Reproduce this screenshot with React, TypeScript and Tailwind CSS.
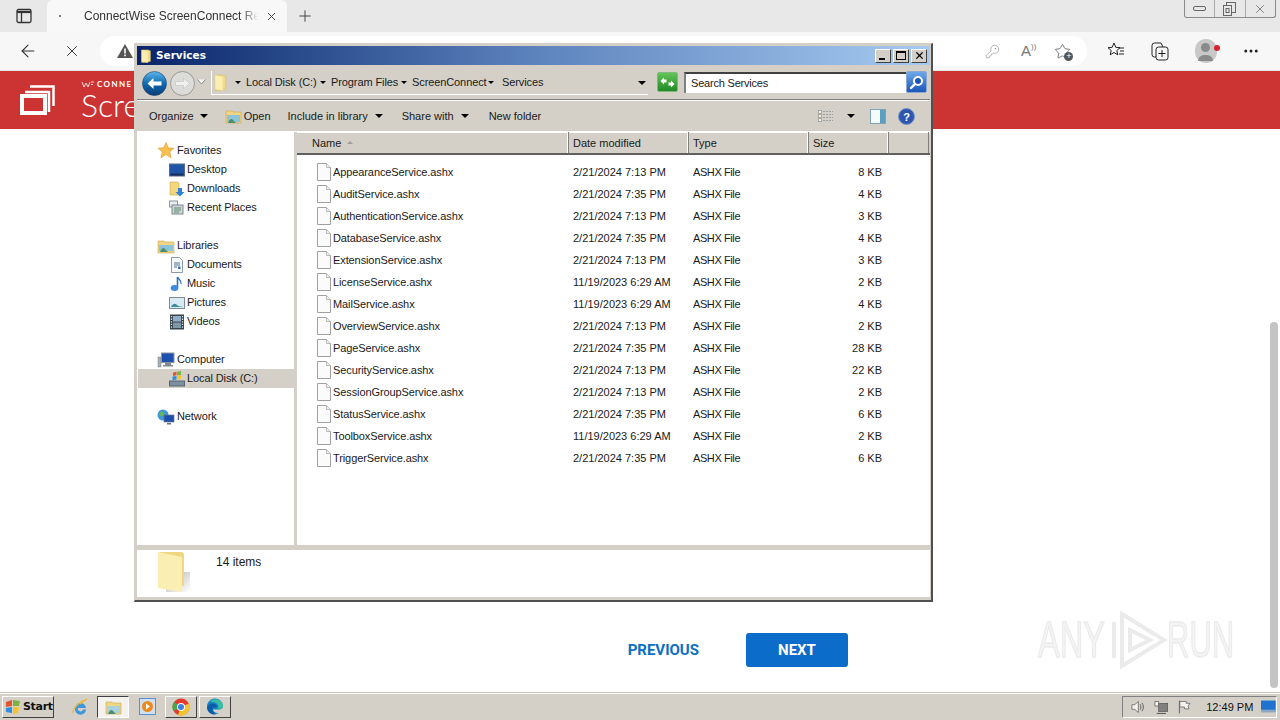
import React from 'react'
import { ArrowLeft, X, Plus, KeyRound, Star, MoreHorizontal } from 'lucide-react'

const files = [
  ['AppearanceService.ashx', '2/21/2024 7:13 PM', '8 KB'],
  ['AuditService.ashx', '2/21/2024 7:35 PM', '4 KB'],
  ['AuthenticationService.ashx', '2/21/2024 7:13 PM', '3 KB'],
  ['DatabaseService.ashx', '2/21/2024 7:35 PM', '4 KB'],
  ['ExtensionService.ashx', '2/21/2024 7:13 PM', '3 KB'],
  ['LicenseService.ashx', '11/19/2023 6:29 AM', '2 KB'],
  ['MailService.ashx', '11/19/2023 6:29 AM', '4 KB'],
  ['OverviewService.ashx', '2/21/2024 7:13 PM', '2 KB'],
  ['PageService.ashx', '2/21/2024 7:35 PM', '28 KB'],
  ['SecurityService.ashx', '2/21/2024 7:13 PM', '22 KB'],
  ['SessionGroupService.ashx', '2/21/2024 7:13 PM', '2 KB'],
  ['StatusService.ashx', '2/21/2024 7:35 PM', '6 KB'],
  ['ToolboxService.ashx', '11/19/2023 6:29 AM', '2 KB'],
  ['TriggerService.ashx', '2/21/2024 7:35 PM', '6 KB'],
]

const FolderIcon = ({ size = 16 }: { size?: number }) => (
  <svg width={size} height={size} viewBox="0 0 16 16">
    <path d="M3 1h7l3 1v12l-4 1.500H3z" fill="#f2dc8c" stroke="#d8bd62" strokeWidth="0.600" />
    <path d="M3 1l7 2v12.500L3 14z" fill="#fbeeb0" />
  </svg>
)

const Caret = () => <span className="inline-block h-0 w-0 border-x-[4px] border-t-[4px] border-x-transparent border-t-black" />

const PageFile = () => (
  <svg width="14" height="18" viewBox="0 0 14 18" className="shrink-0">
    <path d="M.5.5h9l4 4v13H.5z" fill="#fbfbfb" stroke="#a0a0a0" />
    <path d="M9.500.5v4h4" fill="#eee" stroke="#b8b8b8" />
  </svg>
)

const NavGlyph = ({ name }: { name: string }) => {
  if (name === 'Favorites')
    return (
      <svg width="18" height="17" viewBox="0 0 16 16">
        <path d="M8 .5l2.200 5 5.300.4-4 3.500 1.300 5.500L8 11.800l-4.800 3.100 1.300-5.500-4-3.500 5.300-.4z" fill="#f8c04c" stroke="#e89a30" strokeWidth="0.600" />
      </svg>
    )
  if (name === 'Desktop')
    return (
      <svg width="16" height="16" viewBox="0 0 16 16">
        <rect x="0.500" y="2" width="15" height="12" fill="#1f55a8" stroke="#5a6a80" />
        <rect x="1.500" y="11.500" width="13" height="2" fill="#18305c" />
      </svg>
    )
  if (name === 'Downloads')
    return (
      <svg width="16" height="16" viewBox="0 0 16 16">
        <path d="M1 1h7l2 1v12H1z" fill="#f2d77e" stroke="#caa94e" strokeWidth="0.600" />
        <path d="M9 7h4v4h2.500l-4.500 4.500L6.500 11H9z" fill="#2f80d8" />
      </svg>
    )
  if (name === 'Recent Places')
    return (
      <svg width="16" height="16" viewBox="0 0 16 16">
        <rect x="0.500" y="1" width="8" height="6" fill="#e8eef2" stroke="#8a959c" />
        <rect x="3" y="5" width="11" height="9" fill="#cdd6da" stroke="#7c878d" />
        <path d="M5 8h7M5 10h7M5 12h5" stroke="#5f8c6a" />
      </svg>
    )
  if (name === 'Libraries')
    return (
      <svg width="18" height="16" viewBox="0 0 18 16">
        <path d="M1 3h6l1 1h9v11H1z" fill="#f0d585" stroke="#c9a850" strokeWidth="0.600" />
        <path d="M2 7h14v6H2z" fill="#8fc3d8" />
        <path d="M3 14c2-5 4-5 6-2s4 2 6 2z" fill="#4c8f6a" />
      </svg>
    )
  if (name === 'Documents')
    return (
      <svg width="16" height="16" viewBox="0 0 16 16">
        <path d="M2.500.5h8l3 3v12h-11z" fill="#f8fafc" stroke="#8a98a8" />
        <path d="M5 6h6M5 8h6M5 10h3" stroke="#4f6f9a" />
        <rect x="9" y="9.500" width="2.500" height="2.500" fill="#3a70b8" />
      </svg>
    )
  if (name === 'Music')
    return (
      <svg width="16" height="16" viewBox="0 0 16 16">
        <path d="M8.500 1v10.500" stroke="#2e6fc0" strokeWidth="1.600" />
        <path d="M8.500 1c1 2.500 4.500 3 3.500 7" fill="none" stroke="#2e6fc0" strokeWidth="1.300" />
        <ellipse cx="5.500" cy="12" rx="3.800" ry="3" fill="#3d8be0" />
      </svg>
    )
  if (name === 'Pictures')
    return (
      <svg width="16" height="16" viewBox="0 0 16 16">
        <rect x="0.500" y="2.500" width="15" height="11" fill="#d8eaf4" stroke="#7b8a96" />
        <path d="M2 12c2-4 4-4 6-2s4 1 6 2z" fill="#3f8d9c" />
      </svg>
    )
  if (name === 'Videos')
    return (
      <svg width="16" height="16" viewBox="0 0 16 16">
        <rect x="1" y="0.500" width="14" height="15" fill="#38424c" />
        <rect x="4" y="2" width="8" height="5.500" fill="#8fb0c8" />
        <rect x="4" y="8.500" width="8" height="5.500" fill="#7a98a8" />
        <path d="M2.500 2v12M13.500 2v12" stroke="#d8e0e4" strokeWidth="1.300" strokeDasharray="1.300 1.300" />
      </svg>
    )
  if (name === 'Computer')
    return (
      <svg width="18" height="16" viewBox="0 0 18 16">
        <rect x="1" y="5" width="3" height="10" fill="#a8b0b8" stroke="#70787f" strokeWidth="0.500" />
        <rect x="4.500" y="1" width="12.500" height="9.500" fill="#1d4fb0" stroke="#8a94a0" />
        <path d="M8 11h6v2h2v1.500H6V13h2z" fill="#7e8890" />
      </svg>
    )
  if (name === 'Local Disk (C:)')
    return (
      <svg width="16" height="16" viewBox="0 0 16 16">
        <rect x="0.500" y="10" width="15" height="5" fill="#7d8fa0" stroke="#59646e" />
        <path d="M4 1.500l3.500-.7v3.500L4 5z" fill="#e2562f" />
        <path d="M8 .7l4-.7v4l-4 .4z" fill="#7cb342" />
        <path d="M3.500 5.500L7.500 5v3.500l-4 .7z" fill="#2e8fe0" />
        <path d="M8 5l4-.4v3.500L8 8.500z" fill="#f4c430" />
      </svg>
    )
  return (
    <svg width="18" height="16" viewBox="0 0 18 16">
      <circle cx="6" cy="6" r="5.500" fill="#3d97d8" />
      <path d="M2 5c2-3 4-3 5-1s-2 4-4 3z" fill="#66b55a" />
      <rect x="7" y="6" width="10" height="7" fill="#1d4fb0" stroke="#6a7684" strokeWidth="0.700" />
      <path d="M10 14h4v1.500h-4z" fill="#6a7684" />
    </svg>
  )
}

const NavRow = ({ name, child, active }: { name: string; child?: boolean; active?: boolean }) => (
  <div className={`flex h-[19px] items-center ${child ? 'pl-[29px]' : 'pl-[17px]'} ${active ? 'bg-[#d4d0c8]' : ''}`}>
    <span className={`flex justify-center ${child ? 'w-[20px]' : 'w-[22px]'}`}>
      <NavGlyph name={name} />
    </span>
    <span className="whitespace-nowrap tracking-[-0.1px]">{name}</span>
  </div>
)

const NavGroup = ({ children }: { children: React.ReactNode }) => <div className="mb-[19px]">{children}</div>

const Crumb = ({ label, width, gap = 5 }: { label: string; width: number; gap?: number }) => (
  <span className="flex items-center pl-px" style={{ width }}>
    <span className="inline-block h-0 w-0 border-x-[3px] border-t-[3px] border-x-transparent border-t-black" />
    <span className="whitespace-nowrap tracking-[-0.1px]" style={{ marginLeft: gap }}>
      {label}
    </span>
  </span>
)

const HeaderCell = ({ label, className }: { label: string; className: string }) => (
  <div className={`flex h-full items-center border-r border-r-[#808080] pt-px shadow-[inset_-1px_0_0_#fff] ${className}`}>{label}</div>
)

const ExplorerWindow = () => (
  <div className="absolute left-[134px] top-[43px] flex h-[559px] w-[799px] flex-col border-r-2 border-b-2 border-t border-l border-r-[#505050] border-b-[#505050] border-t-[#d4d0c8] border-l-[#d4d0c8] bg-[#d4d0c8] pb-[3px] pl-[2px] pr-[1px] pt-[2px] font-['Liberation_Sans',sans-serif] text-[11px] text-[#1a1a1a]">
    {/* title bar */}
    <div className="flex h-[19px] shrink-0 items-center bg-gradient-to-r from-[#0a246a] via-[#5d83bd] to-[#a6caf0] pl-[2px] pr-[3px]">
      <FolderIcon size={14} />
      <span className="ml-[3px] mt-px font-['DejaVu_Sans',sans-serif] text-[10.5px] font-bold text-white">Services</span>
      <div className="ml-auto flex gap-[2px]">
        {['min', 'max', 'close'].map((k) => (
          <div key={k} className="relative h-[14px] w-[16px] border border-t-white border-l-white border-r-[#404040] border-b-[#404040] bg-[#d4d0c8]">
            {k === 'min' && <span className="absolute bottom-[2px] left-[3px] h-[2px] w-[6px] bg-black" />}
            {k === 'max' && <span className="absolute left-[2px] top-[1px] h-[9px] w-[10px] border border-t-2 border-black" />}
            {k === 'close' && <X size={11} strokeWidth={2.600} className="absolute left-[1.500px] top-0 text-black" />}
          </div>
        ))}
      </div>
    </div>

    {/* address bar */}
    <div className="flex h-[35px] shrink-0 items-center border-b border-b-[#808080] pl-[5px] shadow-[0_1px_0_#fff]">
      <svg width="25" height="25" viewBox="0 0 25 25" className="mt-[2px] shrink-0">
        <defs>
          <linearGradient id="bk" x1="0" y1="0" x2="0" y2="1">
            <stop offset="0" stopColor="#5cb8ea" />
            <stop offset="0.500" stopColor="#0f6bb0" />
            <stop offset="1" stopColor="#0a3c78" />
          </linearGradient>
        </defs>
        <circle cx="12.500" cy="12.500" r="12" fill="url(#bk)" stroke="#20406a" strokeWidth="0.600" />
        <path d="M5.500 12.500l6-5.500v3.500h8v4h-8V18z" fill="#fff" />
      </svg>
      <svg width="25" height="25" viewBox="0 0 25 25" className="ml-[3px] mt-[2px] shrink-0">
        <circle cx="12.500" cy="12.500" r="12" fill="#dcdcd8" stroke="#9a9a96" />
        <path d="M19.500 12.500l-6-5.500v3.500h-8v4h8V18z" fill="#f0f0ee" stroke="#b8b8b4" strokeWidth="0.500" />
      </svg>
      <svg width="9" height="6" viewBox="0 0 9 6" className="ml-[2px] shrink-0">
        <path d="M.5.5L4.500 5 8.500.5" fill="#f4f4f4" stroke="#8a8a8a" />
      </svg>
      <div className="ml-[5px] mt-[2px] flex h-[24px] w-[437px] shrink-0 items-center border-l border-b border-l-white border-b-white">
        <FolderIcon size={17} />
        <div className="ml-[5px] flex items-center">
          <Crumb label="Local Disk (C:)" width={85} />
          <Crumb label="Program Files" width={81} />
          <Crumb label="ScreenConnect" width={87} />
          <Crumb label="Services" width={70} gap={8} />
        </div>
        <span className="ml-auto mr-[2px] flex">
          <Caret />
        </span>
      </div>
      <div className="ml-[9px] flex h-[20px] w-[21px] shrink-0 items-center justify-center rounded-[2px] border border-[#7fb87f] bg-gradient-to-b from-[#62c458] to-[#1f8a26]">
        <svg width="15" height="11" viewBox="0 0 15 11">
          <path d="M.5 4L4 .5V2.500h2.500v3H4V7.500zM14.500 7L11 10.500V8.500H8.500v-3H11V3.500z" fill="#fff" />
        </svg>
      </div>
      <div className="ml-[6px] flex h-[21px] w-[222px] shrink-0 items-center border-t-2 border-l-2 border-t-[#404040] border-l-[#808080] bg-white pl-[5px] tracking-[-0.2px] text-[#222]">Search Services</div>
      <div className="flex h-[22px] w-[21px] shrink-0 items-center justify-center rounded-[2px] border border-[#8aa8d0] bg-gradient-to-b from-[#6fa8e8] to-[#1a56b8]">
        <svg width="15" height="15" viewBox="0 0 15 15">
          <circle cx="9" cy="6" r="4" fill="#1a56b8" stroke="#fff" strokeWidth="2" />
          <path d="M6 9l-4 4" stroke="#fff" strokeWidth="2.400" strokeLinecap="round" />
        </svg>
      </div>
    </div>

    {/* command bar */}
    <div className="mt-px flex h-[31px] shrink-0 items-center border-b border-b-white pl-[12px]">
      <span>Organize</span>
      <span className="ml-[6px] flex">
        <Caret />
      </span>
      <svg width="17" height="16" viewBox="0 0 17 16" className="ml-[17px]">
        <path d="M1 3h6l1 1h8v11H1z" fill="#f0d585" stroke="#c9a850" strokeWidth="0.600" />
        <path d="M2 7h13v7H2z" fill="#8fc3d8" />
        <path d="M3 15c2-5 4-5 6-2s4 2 6 2z" fill="#4c8f6a" />
      </svg>
      <span className="ml-[2px]">Open</span>
      <span className="ml-[17px]">Include in library</span>
      <span className="ml-[7px] flex">
        <Caret />
      </span>
      <span className="ml-[19px]">Share with</span>
      <span className="ml-[7px] flex">
        <Caret />
      </span>
      <span className="ml-[20px]">New folder</span>
      <svg width="16" height="13" viewBox="0 0 16 13" className="ml-auto">
        <path d="M5 1.500h10M5 4.500h10M5 7.500h10M5 10.500h10" stroke="#9aa0a6" strokeDasharray="2 1" />
        <rect x="0.500" y="0.500" width="3" height="3" fill="#f8f4e4" stroke="#a8a8a0" />
        <rect x="0.500" y="4.500" width="3" height="3" fill="#f8f4e4" stroke="#a8a8a0" />
        <rect x="0.500" y="8.500" width="3" height="3" fill="#f8f4e4" stroke="#a8a8a0" />
      </svg>
      <span className="ml-[13px] flex">
        <Caret />
      </span>
      <svg width="16" height="15" viewBox="0 0 16 15" className="ml-[15px]">
        <rect x="0.500" y="0.500" width="15" height="14" fill="#f4fafd" stroke="#7fa4b8" />
        <rect x="10" y="1" width="5" height="13" fill="#5d9dc0" />
      </svg>
      <svg width="17" height="17" viewBox="0 0 17 17" className="ml-[12px] mr-[15px]">
        <circle cx="8.500" cy="8.500" r="8" fill="#2f55b0" stroke="#7e94c8" />
        <text x="8.500" y="12.500" textAnchor="middle" fontSize="11" fontWeight="700" fill="#fff" fontFamily="Liberation Sans">?</text>
      </svg>
    </div>

    {/* panes */}
    <div className="flex min-h-0 flex-1 bg-white">
      <div className="w-[157px] shrink-0 pl-px pt-[9px]">
        <NavGroup>
          <NavRow name="Favorites" />
          <NavRow name="Desktop" child />
          <NavRow name="Downloads" child />
          <NavRow name="Recent Places" child />
        </NavGroup>
        <NavGroup>
          <NavRow name="Libraries" />
          <NavRow name="Documents" child />
          <NavRow name="Music" child />
          <NavRow name="Pictures" child />
          <NavRow name="Videos" child />
        </NavGroup>
        <NavGroup>
          <NavRow name="Computer" />
          <NavRow name="Local Disk (C:)" child active />
        </NavGroup>
        <NavRow name="Network" />
      </div>
      <div className="w-[3px] shrink-0 bg-[#d4d0c8]" />
      <div className="min-w-0 flex-1">
        <div className="flex h-[23px] items-center border-b-2 border-b-[#606060] bg-[#d4d0c8] shadow-[inset_0_1px_0_#fff]">
          <div className="flex h-full w-[272px] items-center border-r border-r-[#808080] pl-[15px] pt-px shadow-[inset_-1px_0_0_#fff]">
            Name
            <span className="ml-[6px] mt-[-2px] h-0 w-0 border-x-[3px] border-b-[3px] border-x-transparent border-b-[#a0a0a0]" />
          </div>
          <HeaderCell label="Date modified" className="w-[120px] pl-[4px]" />
          <HeaderCell label="Type" className="w-[120px] pl-[4px]" />
          <HeaderCell label="Size" className="w-[80px] pl-[4px]" />
          <div className="h-full w-[40px] border-r border-r-[#808080]" />
        </div>
        <div className="pt-[6px]">
          {files.map(([name, date, size]) => (
            <div key={name} className="flex h-[22px] items-center">
              <div className="flex w-[272px] items-center pl-[20px]">
                <PageFile />
                <span className="ml-[2px] whitespace-nowrap tracking-[-0.1px]">{name}</span>
              </div>
              <div className="w-[120px] whitespace-nowrap pl-[4px]">{date}</div>
              <div className="w-[120px] pl-[4px] tracking-[-0.4px]">ASHX File</div>
              <div className="w-[73px] text-right">{size}</div>
            </div>
          ))}
        </div>
      </div>
    </div>

    {/* details pane */}
    <div className="flex h-[52px] shrink-0 border-t-[5px] border-t-[#d4d0c8] bg-white pl-[19px]">
      <svg width="40" height="44" viewBox="0 0 40 44" className="shrink-0">
        <defs>
          <linearGradient id="sh" x1="0" y1="0" x2="1" y2="1">
            <stop offset="0" stopColor="#888" stopOpacity="0.700" />
            <stop offset="1" stopColor="#999" stopOpacity="0" />
          </linearGradient>
        </defs>
        <path d="M10 22h24v20H10z" fill="url(#sh)" />
        <path d="M2 2h24l2 2v32H2z" fill="#f0d67e" />
        <path d="M2 2l24 5v35L2 38z" fill="#fbeeb2" />
      </svg>
      <span className="ml-[20px] mt-[3px] text-[12px]">14 items</span>
    </div>
  </div>
)

const Taskbar = () => (
  <div className="flex h-[28px] shrink-0 items-center border-t border-t-[#c8c4bc] bg-[#d4d0c8] font-['Liberation_Sans',sans-serif] text-[11px] text-[#111] shadow-[inset_0_1px_0_#fff]">
    <div className="ml-[2px] flex h-[22px] w-[52px] items-center border border-t-white border-l-white border-r-[#404040] border-b-[#404040] pl-[2px]">
      <svg width="16" height="14" viewBox="0 0 16 14">
        <path d="M1 2l6-2v6l-6 1z" fill="#e2562f" />
        <path d="M8 0l7 1-1 5-6 0z" fill="#7cb342" />
        <path d="M1 8l6-1v6l-6-1z" fill="#2e8fe0" />
        <path d="M8 7h6l-1 6-5 1z" fill="#f4c430" />
      </svg>
      <span className="ml-[2px] mt-px font-['DejaVu_Sans',sans-serif] text-[11px] font-bold tracking-[-0.3px]">Start</span>
    </div>
    <svg width="18" height="18" viewBox="0 0 18 18" className="ml-[17px]">
      <path d="M4 11a5.500 5.500 0 1 1 11-1H7a2.500 2.500 0 0 0 5 1.500h3A5.500 5.500 0 0 1 4 11z" fill="#3c97dc" />
      <path d="M2 15C1 11 9 3 16 1c-3 2-5 3-7 5" fill="none" stroke="#e8b93c" strokeWidth="1.300" />
    </svg>
    <div className="ml-[8px] flex h-[22px] w-[32px] items-center justify-center border border-t-[#404040] border-l-[#404040] border-r-white border-b-white bg-[#f4f2ee]">
      <svg width="17" height="16" viewBox="0 0 17 16">
        <path d="M1 3h6l1 1h8v11H1z" fill="#f0d585" stroke="#c9a850" strokeWidth="0.600" />
        <path d="M2 7h13v7H2z" fill="#a8d2e0" />
        <path d="M3 15c2-5 4-5 6-2s4 2 6 2z" fill="#4c8f6a" />
      </svg>
    </div>
    <svg width="17" height="17" viewBox="0 0 17 17" className="ml-[10px]">
      <rect x="0.500" y="0.500" width="16" height="16" fill="#cfe0f0" stroke="#5a8fd0" />
      <circle cx="8.500" cy="8.500" r="5.500" fill="#ee8a1e" />
      <path d="M7 5.500l4 3-4 3z" fill="#fff" />
    </svg>
    <div className="ml-[9px] flex h-[22px] w-[32px] items-center justify-center border border-t-white border-l-white border-r-[#404040] border-b-[#404040]">
      <svg width="18" height="18" viewBox="0 0 18 18">
        <circle cx="9" cy="9" r="8.500" fill="#e33b2e" />
        <path d="M9 9L1.500 13A8.500 8.500 0 0 1 2 4z" fill="#4aa84c" />
        <path d="M9 9l7.800-3.500A8.500 8.500 0 0 1 6 17z" fill="#f4c430" />
        <circle cx="9" cy="9" r="4" fill="#fff" />
        <circle cx="9" cy="9" r="3" fill="#3f7fe0" />
      </svg>
    </div>
    <div className="ml-[2px] flex h-[22px] w-[32px] items-center justify-center border border-t-white border-l-white border-r-[#404040] border-b-[#404040]">
      <svg width="18" height="18" viewBox="0 0 18 18">
        <path d="M1 9a8 8 0 0 1 16-1c0 3-3 3.500-5 3.500H7c0 2.500 3 4 6 3.500a8 8 0 0 1-12-6z" fill="#1682c8" />
        <path d="M1 9c2-4 8-5 10-1 0 1-1 1.500-4 1.500C6 11 7 15 10 16.500 5 17 1 14 1 9z" fill="#0a5ca8" />
        <path d="M4 3.500C8-.5 16 1 17 8c0 2-2 3.500-5 3.500 1-3 0-6-3-7-2-.6-3.500-.6-5-1z" fill="#36c0a0" />
      </svg>
    </div>
    <div className="ml-auto mr-[3px] flex h-[22px] w-[155px] items-center border border-t-[#808080] border-l-[#808080] border-r-white border-b-white pl-[8px]">
      <svg width="16" height="16" viewBox="0 0 16 16">
        <path d="M1 5.500h3L8 2v12L4 10.500H1z" fill="#f4f2ee" stroke="#5a5a5a" strokeWidth="0.800" />
        <path d="M10 5c1 2 1 4 0 6M12 3.500c2 3 2 6 0 9" fill="none" stroke="#5a5a5a" />
      </svg>
      <svg width="16" height="16" viewBox="0 0 16 16" className="ml-[8px]">
        <rect x="5" y="4" width="10" height="9" fill="#808080" stroke="#444" strokeWidth="0.600" />
        <path d="M1 2h4v5H1z" fill="#f4f2ee" stroke="#444" strokeWidth="0.700" />
        <path d="M3 15h10" stroke="#444" />
      </svg>
      <svg width="14" height="16" viewBox="0 0 14 16" className="ml-[10px]">
        <path d="M1.500 1v14" stroke="#5a5a5a" />
        <path d="M2 2h7v2h4l-2 3 1 3H7V8H2z" fill="#f4f2ee" stroke="#5a5a5a" strokeWidth="0.800" />
      </svg>
      <span className="ml-[15px] mt-px whitespace-nowrap">12:49 PM</span>
      <svg width="16" height="15" viewBox="0 0 16 15" className="ml-[8px]">
        <rect width="16" height="12" y="1" fill="#1f72d0" />
        <rect width="16" height="3" y="11" fill="#8fa8c0" />
      </svg>
    </div>
  </div>
)

export default function App() {
  return (
    <div className="relative flex h-[720px] w-[1280px] flex-col overflow-hidden bg-white font-['Liberation_Sans',sans-serif]">
      {/* tab strip */}
      <div className="flex h-[32px] shrink-0 items-center bg-[#e8e8e8]">
        <div className="flex w-[47px] justify-center">
          <svg width="16" height="16" viewBox="0 0 16 16" fill="none" stroke="#333" strokeWidth="1.300">
            <rect x="1" y="1.500" width="14" height="13" rx="1.500" />
            <path d="M1 4h14" strokeWidth="2.200" />
            <path d="M5.500 4v10.500" />
          </svg>
        </div>
        <div className="flex h-full w-[240px] items-center rounded-t-[6px] bg-[#f8f8f8] pl-[12px] text-[12px] text-[#333]">
          <span className="h-[2px] w-[2px] rounded-full bg-[#555]" />
          <span className="ml-[23px] w-[174px] whitespace-nowrap [mask-image:linear-gradient(90deg,#000_90%,transparent)]">ConnectWise ScreenConnect Rer</span>
          <X size={13} strokeWidth={1.800} className="ml-[7px] text-[#444]" />
        </div>
        <Plus size={18} strokeWidth={1.300} className="ml-[9px] text-[#444]" />
        <div className="ml-auto mr-[4px] flex h-[18px] w-[92px] self-start rounded-b-[3px] border border-t-0 border-[#8a8a8a] text-[#666]">
          <div className="flex flex-1 items-center justify-center border-r border-r-[#aaa]">
            <span className="h-[5px] w-[13px] rounded-[2px] border border-[#666]" />
          </div>
          <div className="flex flex-1 items-center justify-center border-r border-r-[#aaa]">
            <svg width="13" height="14" viewBox="0 0 13 14" fill="none" stroke="#666">
              <rect x="3.500" y="0.500" width="9" height="10" />
              <rect x="0.500" y="3.500" width="8" height="10" fill="#e8e8e8" />
              <rect x="3" y="6.500" width="3" height="4" />
            </svg>
          </div>
          <div className="flex flex-1 items-center justify-center">
            <X size={14} strokeWidth={1.300} />
          </div>
        </div>
      </div>

      {/* address row */}
      <div className="flex h-[39px] shrink-0 items-center border-b border-b-[#e4e4e4] bg-[#f7f7f7] text-[#333]">
        <ArrowLeft size={20} strokeWidth={1.300} className="ml-[18px]" />
        <X size={18} strokeWidth={1.300} className="ml-[25px]" />
        <div className="ml-[19px] flex h-[30px] w-[987px] items-center rounded-full bg-white pl-[17px]">
          <svg width="16" height="14" viewBox="0 0 16 14">
            <path d="M8 0l8 14H0z" fill="#555" />
            <path d="M7.200 4.500h1.600v5H7.200zM7.200 10.500h1.600v1.700H7.200z" fill="#fff" />
          </svg>
          <KeyRound size={15} strokeWidth={1} className="ml-[852px] text-[#888]" />
          <span className="ml-[21px] text-[15px] font-light text-[#777]">A</span>
          <span className="mb-[8px] text-[8px] text-[#777]">))</span>
          <span className="relative ml-[18px]">
            <Star size={17} strokeWidth={1.100} className="text-[#555]" />
            <span className="absolute bottom-[-1px] right-[-2px] flex h-[9px] w-[9px] items-center justify-center rounded-full bg-[#555] text-[9px] leading-none text-white">+</span>
          </span>
        </div>
        <svg width="18" height="18" viewBox="0 0 18 18" fill="none" stroke="#222" className="ml-[20px]">
          <path d="M7 1l1.800 4.300 4.200.4-3.200 2.800 1 4.300L7 10.500l-3.800 2.300 1-4.300L1 5.700l4.200-.4z" />
          <path d="M12 6h5M13 9h4M12 12h5" />
        </svg>
        <svg width="18" height="19" viewBox="0 0 18 19" fill="none" stroke="#222" className="ml-[26px]">
          <rect x="5" y="5" width="12" height="13" rx="2.500" />
          <path d="M5 15H3.500A2.500 2.500 0 0 1 1 12.500V3.500A2.500 2.500 0 0 1 3.500 1H10l2 4M11 8v7M7.500 11.500h7" />
        </svg>
        <div className="relative ml-[26px] h-[24px] w-[22px] rounded-full bg-[#c8c8c8]">
          <span className="absolute left-[6px] top-[4px] h-[9px] w-[9px] rounded-full bg-[#8a8a8a]" />
          <span className="absolute bottom-[2px] left-[3px] h-[6px] w-[15px] rounded-t-full bg-[#8a8a8a]" />
          <span className="absolute right-[-3px] top-[6px] h-[6px] w-[6px] rounded-full bg-[#e0202c]" />
        </div>
        <MoreHorizontal size={18} strokeWidth={2} className="ml-[25px] text-[#222]" />
      </div>

      {/* page */}
      <div className="flex h-[58px] shrink-0 items-center bg-[#cc3333] pl-[20px]">
        <svg width="35" height="30" viewBox="0 0 35 30" fill="none" stroke="#fff">
          <path d="M10 1.500h23.500V21" strokeWidth="2.500" />
          <path d="M5 7h24v20" strokeWidth="2.500" />
          <rect x="2" y="11" width="23" height="17" strokeWidth="4" />
        </svg>
        <div className="ml-[26px] flex w-[53px] flex-col font-['Lato',sans-serif] text-white">
          <span className="flex items-center whitespace-nowrap text-[8px] font-bold leading-[10px] tracking-[1.400px]">
            <svg width="13" height="7" viewBox="0 0 13 7" fill="none" stroke="#fff" strokeWidth="0.800" className="mr-[3px] shrink-0">
              <path d="M1 1l2 5 2-4 2 4 2-5M10 1h3M10 3.500h2" />
            </svg>
            CONNE
          </span>
          <span className="whitespace-nowrap text-[32px] font-light leading-[32px]">Scre</span>
        </div>
      </div>
      <main className="flex min-h-0 flex-1 items-end justify-end pb-[25px] pr-[432px]">
        <div className="flex items-center font-['Roboto',sans-serif] text-[15px] font-bold text-[#0b6fc4]">
          <span>PREVIOUS</span>
          <span className="ml-[47px] flex h-[34px] w-[102px] items-center justify-center rounded-[3px] bg-[#0b6cc9] text-white">NEXT</span>
        </div>
      </main>
      <Taskbar />

      {/* page scrollbar */}
      <div className="absolute left-[1270px] top-[322px] h-[366px] w-[8px] rounded-full bg-[#c4c4c4]" />

      {/* sandbox watermark */}
      <div className="absolute left-[1038px] top-[610px] flex h-[60px] items-center text-[50px] leading-none text-[#f4f4f4] [-webkit-text-stroke:1.5px_#ebebeb]">
        <span className="w-[66px] origin-left scale-x-[0.65] whitespace-nowrap">ANY</span>
        <svg width="60" height="60" viewBox="0 0 60 60" fill="none" stroke="#ebebeb" strokeWidth="4" className="ml-[4px]">
          <path d="M6 12v36M14 4l42 26-42 26zM22 20l20 10-20 10z" />
        </svg>
        <span className="ml-[-1px] w-[64px] origin-left scale-x-[0.62] whitespace-nowrap">RUN</span>
      </div>

      <ExplorerWindow />
    </div>
  )
}
